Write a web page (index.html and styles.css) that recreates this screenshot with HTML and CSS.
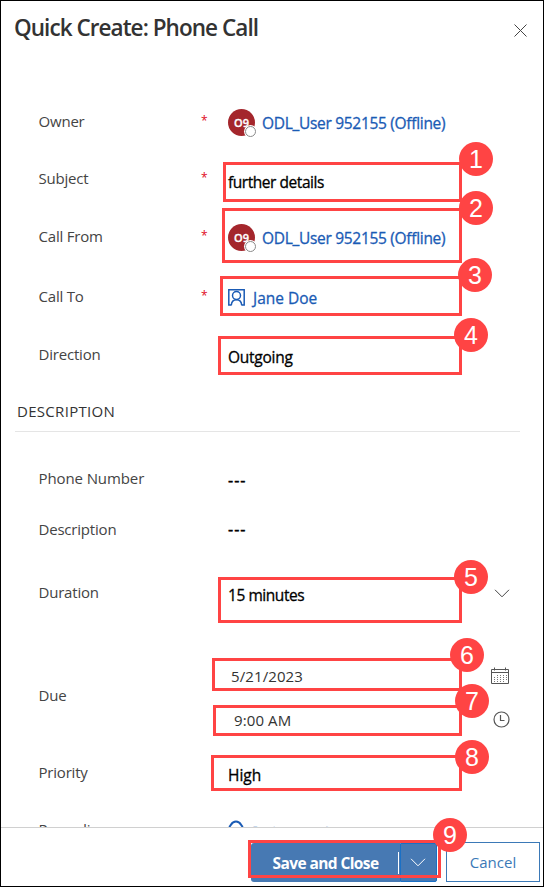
FILE: index.html
```html
<!DOCTYPE html>
<html lang="en">
<head>
<meta charset="utf-8">
<title>Quick Create: Phone Call</title>
<link rel="stylesheet" href="styles.css">
</head>
<body>
<div class="panel">
  <header class="head">
    <h1 class="title">Quick Create: Phone Call</h1>
    <svg class="close" width="13" height="13" viewBox="0 0 13 13"><path d="M.5.5l12 12M12.500.500l-12 12"/></svg>
  </header>
  <main class="form">
    <div class="row owner">
      <span class="label l-owner">Owner</span><span class="req">*</span>
      <div class="value"><span class="avatar">O9<i class="presence"></i></span><a class="link user">ODL_User 952155 (Offline)</a></div>
    </div>
    <div class="row subject">
      <span class="label l-subject">Subject</span><span class="req">*</span>
      <div class="value v-subject">further details</div>
    </div>
    <div class="row from">
      <span class="label l-from">Call From</span><span class="req">*</span>
      <div class="value"><span class="avatar">O9<i class="presence"></i></span><a class="link user">ODL_User 952155 (Offline)</a></div>
    </div>
    <div class="row to">
      <span class="label l-to">Call To</span><span class="req">*</span>
      <div class="value"><svg class="contact" width="17" height="17" viewBox="0 0 17 17"><path d="M3.500 16H.8V.8h15.400V16h-2.700"/><circle cx="8.500" cy="6.500" r="4"/><path d="M3.300 16.300c.2-3.300 2.200-5.600 5.200-5.600s5 2.300 5.200 5.600"/></svg><a class="link jane">Jane Doe</a></div>
    </div>
    <div class="row direction">
      <span class="label l-direction">Direction</span><span></span>
      <div class="value v-direction">Outgoing</div>
    </div>
    <h2 class="section"><span>DESCRIPTION</span></h2>
    <div class="row phone">
      <span class="label l-phone">Phone Number</span><span></span>
      <div class="value dashes">---</div>
    </div>
    <div class="row desc">
      <span class="label l-desc">Description</span><span></span>
      <div class="value dashes">---</div>
    </div>
    <div class="row duration">
      <span class="label l-duration">Duration</span><span></span>
      <div class="value v-duration">15 minutes</div>
      <svg class="chev" width="16" height="9" viewBox="0 0 16 9"><path d="M1 .8l7 7 7-7"/></svg>
    </div>
    <div class="row due">
      <span class="label l-due">Due</span><span></span>
      <div class="stack">
        <div class="line date"><span>5/21/2023</span>
          <svg class="cal" width="18" height="18" viewBox="0 0 18 18"><path class="frame" d="M.5 2.500h17v14H.500zM.5 5.500h17M3.500.500v3M14.500.500v3"/><path class="dots" d="M6 8.500h10M3 10.500h13M3 12.500h13M3 14.500h10"/></svg></div>
        <div class="line time"><span>9:00 AM</span>
          <svg class="clock" width="17" height="17" viewBox="0 0 17 17"><circle cx="8.500" cy="8.500" r="7.500"/><path d="M7.500 4v5.500h4"/></svg></div>
      </div>
    </div>
    <div class="row priority">
      <span class="label l-priority">Priority</span><span></span>
      <div class="value v-priority">High</div>
    </div>
    <div class="row regarding">
      <span class="label l-regarding">Regarding</span><span></span>
      <div class="value"><svg class="person" width="16" height="18" viewBox="0 0 16 18"><path d="M1 7C3.500 5.500 3 1.500 8 1.500S12.500 5.500 15 7M3 8a5 5 0 0 0 10 0"/></svg><a class="link">Refractor Corp</a></div>
    </div>
  </main>
  <footer class="foot">
    <div class="split">
      <button class="save"><span>Save and Close</span></button>
      <button class="more"><svg width="16" height="9" viewBox="0 0 16 9"><path d="M1 .8l7 7 7-7"/></svg></button>
    </div>
    <button class="cancel"><span>Cancel</span></button>
  </footer>
  <div class="mark m1"><b>1</b></div>
  <div class="mark m2"><b>2</b></div>
  <div class="mark m3"><b>3</b></div>
  <div class="mark m4"><b>4</b></div>
  <div class="mark m5"><b>5</b></div>
  <div class="mark m6"><b>6</b></div>
  <div class="mark m7"><b>7</b></div>
  <div class="mark m8"><b>8</b></div>
  <div class="mark m9"><b>9</b></div>
</div>
</body>
</html>
```
FILE: styles.css
```css
* { box-sizing: border-box; }
body { margin: 0; background: #fff; font: 15px/20px "Open Sans", "Noto Sans", sans-serif; color: #444; }
svg { fill: none; flex: none; }
.panel { position: relative; width: 544px; height: 887px; border: 1px solid #000; display: flex; flex-direction: column; overflow: hidden; white-space: nowrap; }

.head { flex: none; height: 93px; padding: 11px 16px 0 13px; display: flex; justify-content: space-between; align-items: flex-start; }
.title { margin: 0; font-size: 22.5px; line-height: 32px; font-weight: 600; color: #333; letter-spacing: -.95px; }
.close { margin-top: 12px; stroke: #444; }

.form { flex: 1; min-height: 0; overflow: hidden; display: flex; flex-direction: column; }
.row { flex: none; display: grid; grid-template-columns: 163px 27px 1fr auto; align-items: center; padding: 0 33px 0 37px; }
.label { font-weight: 400; letter-spacing: -.2px; padding: 0 0 2px .5px; }
.l-phone { letter-spacing: -.1px; }
.req { color: #e00b1c; font-size: 12px; padding-bottom: 2px; }
.value { display: flex; align-items: center; color: #000; font-size: 15.5px; font-weight: 500; letter-spacing: -.25px; padding-top: 4px; -webkit-text-stroke: .3px currentColor; }
.owner { height: 56px; }
.subject { height: 58px; }
.from { height: 58px; }
.to { height: 62px; }
.direction { height: 54px; }
.owner .value, .from .value, .to .value { padding-top: 1px; }
.v-subject { letter-spacing: -.45px; padding-top: 6px; }
.v-duration { letter-spacing: -.45px; }
.v-priority { letter-spacing: 0; padding-top: 6px; }
.l-priority { padding-bottom: 0; }
.phone { height: 50px; margin-top: 22px; }
.desc { height: 52px; }
.dashes { font-size: 16px; letter-spacing: 1px; padding-top: 2px; -webkit-text-stroke: .4px currentColor; }
.desc .dashes { padding: 0 0 2px; }
.duration { height: 52px; margin-top: 11px; }
.due { height: 78px; margin-top: 38px; }
.priority { height: 74px; }
.regarding { height: 40px; }
.regarding .label { padding: 0 0 0 .5px; }
.regarding .value { padding: 4px 0 0; align-items: flex-start; }
.regarding .link { padding-top: 3px; }

.link { color: #1a5bb5; }
.user { letter-spacing: -.3px; padding-top: 1px; }
.jane { letter-spacing: 0; }
.avatar { position: relative; width: 27px; height: 27px; margin: 0 7px 0 0; border-radius: 50%; background: #a4262c; color: #fff; font-size: 11px; font-weight: 600; line-height: 27px; text-align: center; letter-spacing: .1px; }
.presence { position: absolute; right: -1px; bottom: -1px; width: 11px; height: 11px; border: 1px solid #8a8a8a; border-radius: 50%; background: #fff; box-shadow: 0 0 0 1px #fff; }
.contact { margin-right: 8px; stroke: #1a5bb5; stroke-width: 1.5; }
.chev { stroke: #444; }

.section { flex: none; margin: 10px 23px 0 14px; height: 40px; padding: 9px 0 0 2px; border-bottom: 1px solid #e5e5e5; font-size: 15px; line-height: 20px; font-weight: 400; color: #333; letter-spacing: .3px; }

.stack { grid-column: 3 / 5; display: flex; flex-direction: column; gap: 24px; padding-top: 3px; }
.line { display: flex; align-items: center; justify-content: space-between; height: 20px; color: #333; letter-spacing: .1px; }
.date { padding-left: 3px; }
.time { padding-left: 6px; }
.cal { margin-right: 1px; }
.cal .frame { stroke: #555; }
.cal .dots { stroke: #777; stroke-dasharray: 1 2; }
.clock { stroke: #555; stroke-width: 1.200; }
.person { margin-right: 8px; stroke: #1a5bb5; stroke-width: 2; }

.foot { flex: none; height: 59px; border-top: 1px solid #d0d0d0; background: #fff; display: flex; align-items: flex-start; justify-content: flex-end; padding: 14px 3px 0; gap: 9px; }
.foot button { font: 15px/20px "Open Sans", "Noto Sans", sans-serif; padding: 0; border: 0; }
.split { display: flex; margin-top: 1px; }
.foot .save { width: 149px; height: 39px; border-radius: 3px 0 0 3px; background: linear-gradient(#fff, #fff) right 1px center / 1px 22px no-repeat #4779b3; color: #fff; font-size: 15.5px; font-weight: 700; letter-spacing: -.6px; }
.foot .more { width: 37px; height: 39px; border: 1px solid #1a70c5; background: #4779b3; border-radius: 0 2px 2px 0; display: flex; align-items: center; justify-content: center; padding-right: 2px; }
.more svg { stroke: #fff; }
.foot .cancel { width: 94px; height: 40px; border: 1px solid #3b79b7; background: #fff; color: #3b79b7; }

.mark { position: absolute; border: 3px solid #ff4444; }
.mark b { position: absolute; width: 34px; height: 34px; border-radius: 50%; background: #ff4444; color: #fff; font: 25px/34px "Liberation Sans", Arial, sans-serif; text-align: center; }
.m1 { left: 222px; top: 161px; width: 239px; height: 40px; } .m1 b { right: -34px; top: -23px; }
.m2 { left: 221px; top: 207px; width: 240px; height: 55px; } .m2 b { right: -34px; top: -20px; }
.m3 { left: 219px; top: 275px; width: 242px; height: 40px; } .m3 b { right: -33px; top: -21px; }
.m4 { left: 217px; top: 335px; width: 244px; height: 39px; } .m4 b { right: -29px; top: -21px; }
.m5 { left: 217px; top: 576px; width: 244px; height: 46px; } .m5 b { right: -29px; top: -20px; }
.m6 { left: 211px; top: 657px; width: 250px; height: 33px; } .m6 b { right: -25px; top: -23px; }
.m7 { left: 212px; top: 704px; width: 249px; height: 31px; } .m7 b { right: -30px; top: -24px; }
.m8 { left: 210px; top: 754px; width: 251px; height: 36px; } .m8 b { right: -30px; top: -18px; }
.m9 { left: 247px; top: 839px; width: 193px; height: 38px; } .m9 b { right: -29px; top: -25px; }
```
